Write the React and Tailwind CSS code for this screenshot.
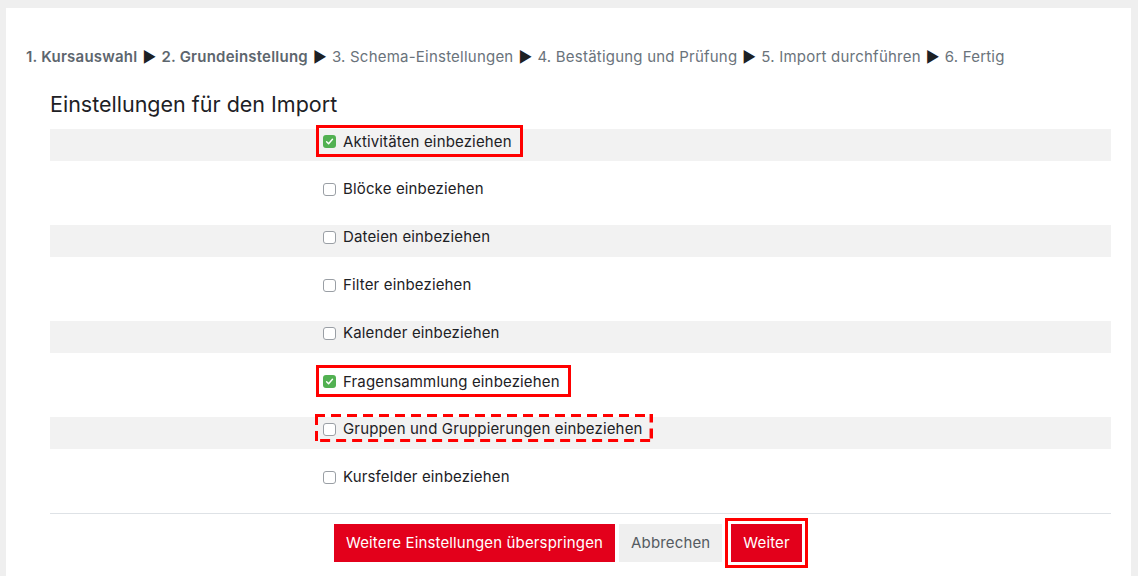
import React from "react";

const steps = [
  { label: "1. Kursauswahl", bold: true },
  { label: "2. Grundeinstellung", bold: true },
  { label: "3. Schema-Einstellungen" },
  { label: "4. Bestätigung und Prüfung" },
  { label: "5. Import durchführen" },
  { label: "6. Fertig" },
];

const options = [
  { label: "Aktivitäten einbeziehen", checked: true, mark: "solid" },
  { label: "Blöcke einbeziehen" },
  { label: "Dateien einbeziehen" },
  { label: "Filter einbeziehen" },
  { label: "Kalender einbeziehen" },
  { label: "Fragensammlung einbeziehen", checked: true, mark: "solid" },
  { label: "Gruppen und Gruppierungen einbeziehen", mark: "dashed" },
  { label: "Kursfelder einbeziehen" },
];

function Box({ checked }) {
  if (checked) {
    return (
      <span className="flex h-[13px] w-[13px] items-center justify-center rounded-[3px] bg-[#52b152]">
        <svg width="9" height="9" viewBox="0 0 10 10" fill="none">
          <path d="M1.8 5.2 L4 7.4 L8.3 2.6" stroke="white" strokeWidth="1.6" strokeLinecap="round" strokeLinejoin="round" />
        </svg>
      </span>
    );
  }
  return <span className="block h-[13px] w-[13px] rounded-[3px] border border-[#9a9fa5] bg-white" />;
}

function Option({ opt, striped }) {
  return (
    <div className={`mb-4 h-8 pl-[273px] ${striped ? "bg-[#f2f2f2]" : ""}`}>
      <label className="relative inline-flex h-6 items-center gap-[7px]">
        <Box checked={opt.checked} />
        <span>{opt.label}</span>
        {opt.mark === "solid" && (
          <span className="pointer-events-none absolute -left-[7px] -right-[11px] -top-[5px] -bottom-[3px] border-[3px] border-[#ff0000]" />
        )}
        {opt.mark === "dashed" && (
          <svg className="pointer-events-none absolute -left-[8px] -right-[10px] -top-[3px] -bottom-[1px] h-[calc(100%+4px)] w-[calc(100%+18px)]">
            <rect x="0" y="0" width="100%" height="100%" fill="none" stroke="#ff0000" strokeWidth="6" strokeDasharray="10 6" />
          </svg>
        )}
      </label>
    </div>
  );
}

export default function App() {
  return (
    <div className="min-h-screen bg-[#efefef] pl-[6px] pr-[7px] pt-2 text-[15px] leading-6 tracking-[0.15px] text-[#1d2125]" style={{ fontFamily: "Inter, 'Noto Sans', sans-serif" }}>
      <div className="min-h-[600px] bg-white pt-[37px]">
        <div className="pl-5 tracking-[0.22px] text-[#6a737b]">
          {steps.map((s, i) => (
            <span key={s.label}>
              <span className={s.bold ? "font-semibold text-[#5d666e]" : ""}>{s.label}</span>
              {i < steps.length - 1 && <span className="mx-[5px] text-[#1d2125]">▶</span>}
            </span>
          ))}
        </div>

        <div className="pl-[44px] pr-5">
          <h3 className="mt-5 mb-[10px] text-[21.5px] leading-[30px] font-normal tracking-normal">Einstellungen für den Import</h3>

          {options.map((opt, i) => (
            <Option key={opt.label} opt={opt} striped={i % 2 === 0} />
          ))}

          <div className="border-t border-[#dee2e6]" />

          <div className="flex items-center gap-1 pl-[284px] pt-[10px]">
            <button className="h-[38px] bg-[#e3001b] px-3 text-white">Weitere Einstellungen überspringen</button>
            <button className="h-[38px] bg-[#efefef] px-3 text-[#555b61]">Abbrechen</button>
            <button className="relative ml-[5px] h-[38px] bg-[#e3001b] px-3 text-white">
              Weiter
              <span className="pointer-events-none absolute -inset-[6px] border-[3px] border-[#ff0000]" />
            </button>
          </div>
        </div>
      </div>
    </div>
  );
}
